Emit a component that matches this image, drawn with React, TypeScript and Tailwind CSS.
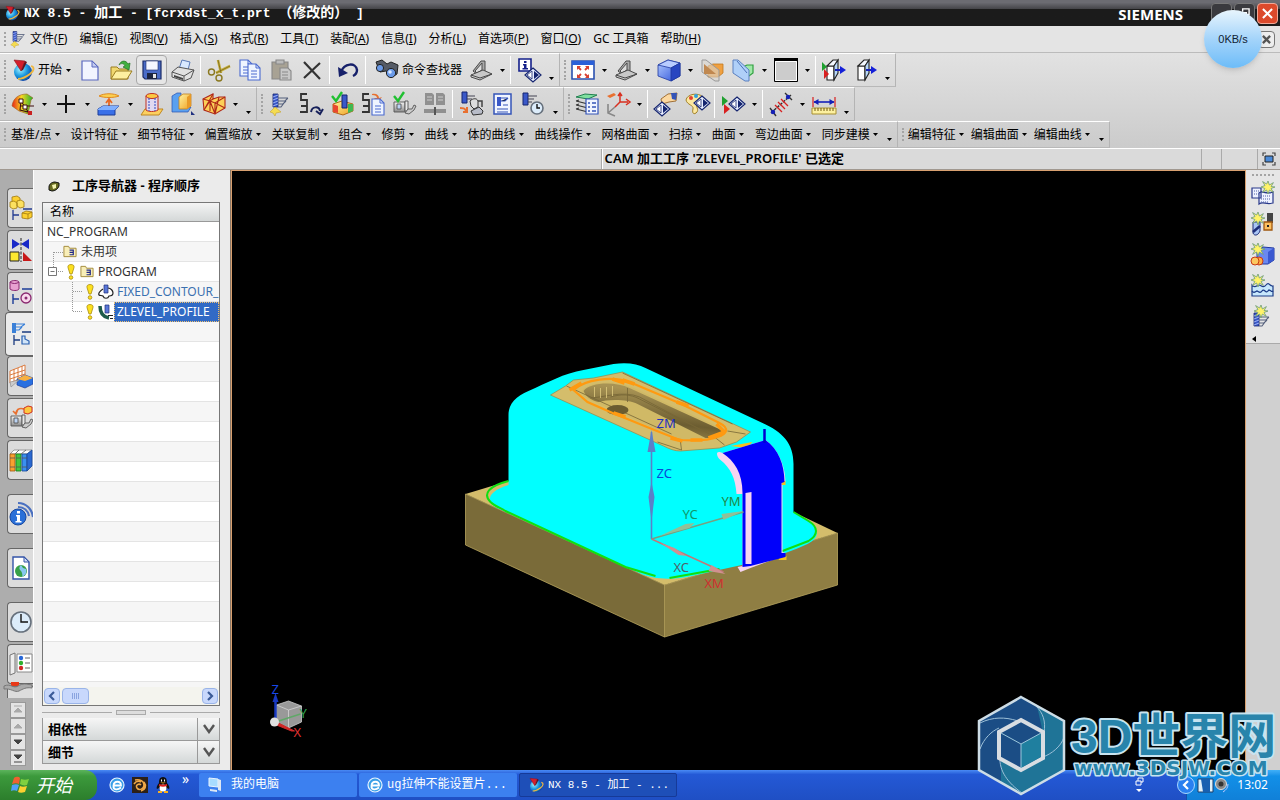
import React from 'react';

const UI_FONT = "font-['Noto_Sans','Noto_Sans_CJK_SC',sans-serif]";
const SONG_FONT = "font-['Liberation_Mono','Noto_Sans_CJK_SC',monospace]";

// ---------- shared drawing pieces ----------

const Defs = () => (
  <svg className="absolute size-0" aria-hidden="true">
    <defs>
      <linearGradient id="blueBox" x1="0" y1="0" x2="1" y2="1">
        <stop offset="0" stopColor="#b4ccff" />
        <stop offset="1" stopColor="#2a50d8" />
      </linearGradient>
      <linearGradient id="goldBox" x1="0" y1="0" x2="1" y2="1">
        <stop offset="0" stopColor="#fff3a0" />
        <stop offset="1" stopColor="#f0a020" />
      </linearGradient>
      <linearGradient id="rainbow" x1="0" y1="0" x2="1" y2="0">
        <stop offset="0" stopColor="#e8201a" />
        <stop offset="0.45" stopColor="#f8d820" />
        <stop offset="1" stopColor="#20b030" />
      </linearGradient>
      <linearGradient id="steel" x1="0" y1="0" x2="0" y2="1">
        <stop offset="0" stopColor="#f4f4f4" />
        <stop offset="1" stopColor="#8a8a8a" />
      </linearGradient>
      <radialGradient id="globe" cx="0.35" cy="0.35" r="0.75">
        <stop offset="0" stopColor="#a8f4ff" />
        <stop offset="0.5" stopColor="#1c9be0" />
        <stop offset="1" stopColor="#0a2f9a" />
      </radialGradient>
      <linearGradient id="pocketWall" x1="0" y1="0" x2="-0.3" y2="1">
        <stop offset="0" stopColor="#a89354" />
        <stop offset="0.5" stopColor="#6c5d31" />
        <stop offset="1" stopColor="#b8a25c" />
      </linearGradient>
    </defs>
  </svg>
);

const Tool = () => (
  <g>
    <path d="M8 2h5v13H8z" fill="#3a58c8" stroke="#14246e" strokeWidth="0.8" />
    <path d="M8 5l5-2M8 8l5-2M8 11l5-2M8 14l5-2" stroke="#a8bcf8" strokeWidth="0.9" />
    <path d="M13 6h10M13 9h7l3-3M13 12h5l3-3M13 15h3l3-4" fill="none" stroke="#55607c" strokeWidth="1.1" />
  </g>
);

const Diamond = ({ x = 12, y = 15 }: { x?: number; y?: number }) => (
  <g transform={`translate(${x} ${y})`}>
    <path d="M0-7L8 0 0 7-8 0z" fill="#e8eeff" stroke="#14246e" strokeWidth="1.2" />
    <path d="M-1-4v8l-5-4z" fill="#fff" stroke="#14246e" strokeWidth="0.8" />
    <path d="M1-4v8l5-4z" fill="#14246e" />
  </g>
);

const Spark = ({ x, y }: { x: number; y: number }) => (
  <path
    transform={`translate(${x} ${y})`}
    d="M0-6l1.4 4 4-2.4-2.3 3.9L7 0 3 1.5l2.4 3.9-4-2.3L0 7l-1.4-4-4 2.4 2.3-3.9L-7 0l4-1.5-2.4-3.9 4 2.4z"
    fill="#fff36a"
    stroke="#6a9a78"
    strokeWidth="0.8"
  />
);

const Logo = () => (
  <g>
    <circle cx="12" cy="14" r="9" fill="url(#globe)" />
    <path d="M5 17c4 5 10 6 14 1-3 4-10 4-14-1z" fill="#3ccf6a" />
    <path d="M20 8c4 1 3 5-1 8s-8 5-12 5" fill="none" stroke="#f0b840" strokeWidth="1.8" />
    <path d="M3 2l11 1-4 10z" fill="#d41f2c" stroke="#8a1018" strokeWidth="0.6" />
    <path d="M14 3l-4 10 2-1 4-8z" fill="#6a1018" />
  </g>
);

const Device = () => (
  <g stroke="#4a4a4a" strokeWidth="1">
    <path d="M4 13L12 3l4 0v10L9 17z" fill="#aaa" />
    <path d="M6 13l7-8v7L8 15z" fill="#ddd" />
    <path d="M2 17l12-5 9 4-12 6-9-3z" fill="#c8c8c8" />
    <path d="M2 17l9 3 12-4" fill="none" />
  </g>
);

const Door = ({ marks }: { marks?: boolean }) => (
  <g>
    <path d="M5 8h7v14H5z" fill="#fff" stroke="#222" strokeWidth="1.1" />
    <path d="M5 8l6-6h5l-4 6z" fill="#f4f8ff" stroke="#222" strokeWidth="1.1" />
    <path d="M12 8l4-6v13l-4 7z" fill="#b8d8f8" stroke="#222" strokeWidth="1.1" />
    <path d="M13 12h7" stroke="#1420b8" strokeWidth="2" />
    <path d="M18 8l6 4-6 4z" fill="#1420d8" />
    {marks && (
      <g>
        <path d="M0 4l5 5-5 4z" fill="#20a030" />
        <path d="M2 11l5 5-5 5z" fill="#d82020" />
      </g>
    )}
  </g>
);

const Check = () => <path d="M2 4l4 5L12 0" fill="none" stroke="#20c030" strokeWidth="2.4" />;

const Machine = () => (
  <g stroke="#555" strokeWidth="0.9">
    <path d="M2 10h11v10H2z" fill="url(#steel)" />
    <path d="M5 12h4v5H5z" fill="#bcd4f4" />
    <path d="M13 9h3v10h-3z" fill="#e8e8e8" />
    <path d="M16 17h4l2-4 2 1-2 4-5 4-4-1z" fill="#ccc" />
  </g>
);

const Doc = ({ x = 8, y = 6 }: { x?: number; y?: number }) => (
  <g transform={`translate(${x} ${y})`}>
    <path d="M0 0h8l4 4v12H0z" fill="#eef4ff" stroke="#4a6ad0" strokeWidth="1.1" />
    <path d="M8 0v4h4M3 7h6M3 10h6M3 13h6" fill="none" stroke="#4a6ad0" />
  </g>
);

const Clock = ({ x, y, r }: { x: number; y: number; r: number }) => (
  <g>
    <circle cx={x} cy={y} r={r} fill="#dcecfa" stroke="#66707c" strokeWidth="1.6" />
    <path d={`M${x} ${y - r + 2}V${y}H${x + r - 3}`} fill="none" stroke="#111" strokeWidth="1.4" />
  </g>
);

const Serpent = () => (
  <path d="M8 2H2v6h6v6H2M8 14v6H1" fill="none" stroke="#333" strokeWidth="1.8" />
);

const icons: Record<string, React.ReactNode> = {
  logo: <Logo />,
  tool: (
    <g>
      <Tool />
      <path d="M5 20l5-5 6 5-5 1-1 3-2-3z" fill="#f4dc50" stroke="#c09820" strokeWidth="0.5" />
    </g>
  ),
  new: (
    <g>
      <path d="M4 3h10l6 6v13H4z" fill="#f2f4ff" stroke="#5a68c0" strokeWidth="1.2" />
      <path d="M14 3v6h6z" fill="#c4ccf0" stroke="#5a68c0" />
    </g>
  ),
  open: (
    <g>
      <path d="M2 21V9h6l2 2h9v10z" fill="#f0d870" stroke="#9a7c20" />
      <path d="M2 21l5-8h16l-5 8z" fill="#fdf0a0" stroke="#9a7c20" />
      <path d="M10 7c2-5 7-5 9-1l2-1-1 7-6-3 2-1c-1-3-4-3-6-1z" fill="#40b040" stroke="#207020" strokeWidth="0.7" />
    </g>
  ),
  save: (
    <g>
      <path d="M3 3h18v18H5l-2-2z" fill="#4a6cc8" stroke="#1c2c68" strokeWidth="1.2" />
      <path d="M6 3h12v9H6z" fill="#f4f6ff" stroke="#1c2c68" strokeWidth="0.6" />
      <path d="M7 15h10v6H7z" fill="#1c2440" />
      <path d="M13 16h3v4h-3z" fill="#e8e8e8" />
    </g>
  ),
  print: (
    <g stroke="#555">
      <path d="M8 11l3-9 8 2-2 8z" fill="#d8e8ff" stroke="#5a7ab8" />
      <path d="M1 14l6-5 16 3-3 8-7 3-12-4z" fill="#e0e0e0" />
      <path d="M1 14l12 4 10-6M13 18v5" fill="none" />
      <path d="M3 17l9 3v2l-9-3z" fill="#444" stroke="none" />
    </g>
  ),
  cut: (
    <g fill="none" stroke="#8a7820" strokeWidth="1.4">
      <path d="M11 2l3 13M23 8L9 15" stroke="#c8b040" strokeWidth="2.6" />
      <path d="M11 2l3 13M23 8L9 15" stroke="#756418" strokeWidth="0.8" />
      <circle cx="4.5" cy="14" r="3" />
      <circle cx="12" cy="20" r="3" />
    </g>
  ),
  copy: (
    <g>
      <Doc x={2} y={2} />
      <Doc x={10} y={6} />
    </g>
  ),
  paste: (
    <g stroke="#888" strokeWidth="1.1">
      <path d="M3 4h16v17H3z" fill="#a8a294" />
      <path d="M7 2h8v4H7z" fill="#bbb" />
      <path d="M11 10h8l3 3v9H11z" fill="#c8c8c8" />
      <path d="M13 14h6M13 17h6M13 20h6" />
    </g>
  ),
  delete: <path d="M4 4l16 17M20 5L4 20" stroke="#333" strokeWidth="2.2" />,
  undo: (
    <g>
      <path d="M5 14C8 5 20 4 21 12c0 3-2 5-4 6" fill="none" stroke="#16206a" strokeWidth="2.4" />
      <path d="M2 9l1 10 9-4z" fill="#16206a" />
    </g>
  ),
  find: (
    <g>
      <path d="M1 4l6-2 5 4 4-2 7 3-1 9-5 3-6-6-6 1z" fill="#555b66" stroke="#222" />
      <circle cx="5" cy="10" r="3.6" fill="#6a9ae8" stroke="#222" />
      <circle cx="16" cy="15" r="4.6" fill="#6a9ae8" stroke="#222" />
      <circle cx="15" cy="14" r="1.8" fill="#d8e8ff" />
    </g>
  ),
  device: <Device />,
  info: (
    <g>
      <path d="M2 1h12v12H2z" fill="#fff" stroke="#14208a" strokeWidth="1.6" />
      <path d="M7 3h2.5v2H7zM6 6h3.5v4H11v1.5H5.500V10H7V7.500H6z" fill="#14208a" />
      <Diamond x={16} y={17} />
    </g>
  ),
  fit: (
    <g>
      <path d="M1 3h22v18H1z" fill="#fff" stroke="#2a50b0" strokeWidth="1.6" />
      <path d="M1 3h22v4H1z" fill="#2a60d8" />
      <path d="M7 9l3 3M17 9l-3 3M7 19l3-3M17 19l-3-3" stroke="#d84030" strokeWidth="1.8" />
      <path d="M6 8h4l-4 4zM18 8h-4l4 4zM6 20h4l-4-4zM18 20h-4l4-4z" fill="#d84030" />
    </g>
  ),
  cube: (
    <g stroke="#2038a0" strokeWidth="0.8">
      <path d="M1 7l10-5 12 3v13l-9 5L1 18z" fill="url(#blueBox)" />
      <path d="M1 7l10-5 12 3-9 5z" fill="#b8ccff" />
      <path d="M14 10l9-5v13l-9 5z" fill="#2846c0" />
    </g>
  ),
  clip: (
    <g>
      <path d="M8 8l5-2h10v9l-5 4H8z" fill="#f0a040" stroke="#c07820" strokeWidth="0.8" />
      <path d="M2 2l4 0 13 10v11l-4 0L2 14z" fill="#d8d4cc" fillOpacity="0.6" stroke="#999" />
      <path d="M4 6l12 10H4z" fill="#c08850" />
    </g>
  ),
  clipEdit: (
    <g>
      <path d="M12 9l4-2h6v8l-4 3h-6z" fill="#a0e8a8" stroke="#30a040" strokeWidth="1.2" />
      <path d="M2 2h5l11 10v11h-4L2 15z" fill="#b0d0f8" stroke="#5a80c0" />
      <path d="M6 3l10 12" stroke="#4a70b8" />
    </g>
  ),
  swatch: (
    <g>
      <path d="M.5.5h23v23H.5z" fill="#ccc" stroke="#000" />
      <path d="M0 0h24v3H0z" fill="#000" />
      <path d="M1.500 3.500h21v19h-21z" fill="none" stroke="#fff" />
    </g>
  ),
  doorMarks: <Door marks />,
  door: <Door />,
  curveAnalysis: (
    <g>
      <path d="M1 14C2 6 8 2 16 2l6 4-2 2-3 14-9-3z" fill="url(#rainbow)" stroke="#a06020" strokeWidth="0.6" />
      <path d="M10 9l8 12M10 9l-1 9 12 3M9 14h14" fill="none" stroke="#401010" strokeWidth="1.1" />
      <path d="M8 7h4v4H8zM12 13h4v4h-4z" fill="#fff" stroke="#401010" />
      <path d="M17 19h4v4h-4z" fill="#c82020" />
    </g>
  ),
  plus: <path d="M12 3v18M3 12h18" stroke="#111" strokeWidth="2" />,
  extrude: (
    <g>
      <path d="M2 4c5-3 15-3 20 0-5 2-15 2-20 0z" fill="#fcd050" stroke="#e08a20" />
      <path d="M12 17V8M9 11l3-4 3 4" fill="none" stroke="#e86820" strokeWidth="1.8" />
      <path d="M1 17l5-3h16l-4 4v5H1z" fill="#3a70e8" stroke="#1c3c98" />
      <path d="M1 17l5-3h16l-4 4H1z" fill="#80b0ff" />
    </g>
  ),
  cylinder: (
    <g>
      <path d="M5 17h18l-4 6H1z" fill="#fcd060" stroke="#c08820" />
      <path d="M6 4v14c2 2 9 2 12 0V4z" fill="#e0d8f0" stroke="#c03020" />
      <ellipse cx="12" cy="4" rx="6" ry="2.5" fill="#fcc840" stroke="#c03020" />
      <path d="M9 6v13M15 6v13" stroke="#3048c0" strokeDasharray="2 1" />
    </g>
  ),
  offset: (
    <g>
      <path d="M1 4l5-3h4v14h10l-3 5H1z" fill="#5aa0f0" stroke="#2850b0" strokeWidth="0.7" />
      <path d="M8 5l4-3h8v12l-4 3H8z" fill="url(#goldBox)" stroke="#c08020" strokeWidth="0.8" />
      <path d="M16 5l4-3v12l-4 3z" fill="#e89a28" />
      <path d="M20 19v4h4z" fill="#203080" />
    </g>
  ),
  wireBox: (
    <g stroke="#b02818" strokeWidth="1.1" fill="#fcd058">
      <path d="M1 7l10-5v5l6-2 6 0v11l-10 6L2 18z" />
      <path d="M1 7l7 2 3-2M8 9l5 2 10-6M13 11v11M8 9v10M2 18L11 2M8 9l5 13M13 11l10 5M2 18l6-9M17 5l-4 17" fill="none" />
    </g>
  ),
  createTool: (
    <g transform="translate(-3 0)">
      <Tool />
      <path d="M5 20l5-5 6 5-5 1-1 3-2-3z" fill="#f4dc50" stroke="#c09820" strokeWidth="0.5" />
    </g>
  ),
  path: (
    <g>
      <Serpent />
      <path d="M12 20c1-6 8-6 9-1M24 17l-3 5-4-3" fill="none" stroke="#16205a" strokeWidth="2" />
    </g>
  ),
  verify: (
    <g>
      <path d="M3 12l9-3 11 3v7l-10 4L3 20z" fill="url(#goldBox)" stroke="#b06818" />
      <path d="M3 12l5 2v7l-5-1z" fill="#e84830" />
      <path d="M18 12l5 0v7l-5 2z" fill="#40b850" />
      <path d="M12 3h5v13h-5z" fill="#3a58c8" stroke="#14246e" />
      <Check />
    </g>
  ),
  output: (
    <g>
      <Serpent />
      <path d="M11 2c4-1 7 1 7 4l3-1-4 5-4-4h3c0-2-2-3-5-3z" fill="#e87030" />
      <Doc x={11} y={7} />
    </g>
  ),
  verifyMachine: (
    <g>
      <Machine />
      <Check />
    </g>
  ),
  compare: (
    <g fill="#909090">
      <path d="M2 1h7l2 2v10H2zM13 1h7l2 2v10h-9z" />
      <path d="M1 17h22v4H1z" />
      <path d="M11 15h2v8h-2z" fill="#555" />
      <path d="M4 5h5M4 8h5M15 5h5M15 8h5" stroke="#ccc" />
    </g>
  ),
  toolMachine: (
    <g>
      <path d="M3 0h5v11H3z" fill="#3a58c8" stroke="#14246e" />
      <path d="M8 4h8M8 7h5" stroke="#445" strokeWidth="1.2" />
      <path d="M11 9c3-3 7-3 8 0v6l-4 2-3-3z" fill="#ddd" stroke="#333" />
      <path d="M12 19l8-4 4 4-1 3-9 1z" fill="#b8bcc8" stroke="#333" />
      <path d="M19 9h4v6" fill="none" stroke="#444" strokeWidth="1.5" />
      <path d="M1 16c3 0 5 0 6 3M8 15v5H4" fill="none" stroke="#e87030" strokeWidth="2" />
    </g>
  ),
  shopDoc: (
    <g>
      <path d="M4 2h17v20H4z" fill="#f2f6ff" stroke="#3454b8" strokeWidth="1.5" />
      <path d="M7 5h4v9H7z" fill="#3a58c8" />
      <path d="M11 6h7M11 9h4l3-3M7 17h11M7 20h11M13 13h5" stroke="#3454b8" strokeWidth="1.2" />
    </g>
  ),
  toolClock: (
    <g>
      <path d="M2 1h5v12H2z" fill="#3a58c8" stroke="#14246e" />
      <path d="M7 4h9M7 7h6M7 10h4" stroke="#445" strokeWidth="1.2" />
      <Clock x={16} y={16} r={6} />
    </g>
  ),
  layers: (
    <g>
      <path d="M1 5l9-3 12 1-9 4z" fill="#80e0a0" stroke="#208050" />
      <path d="M1 9l12 3M1 13l12 3M1 17l12 3M1 9l3-1M1 13l3-1M1 17l3-1" stroke="#333" strokeWidth="1.2" />
      <path d="M11 7h12v15H11z" fill="#f0f4ff" stroke="#3454b8" strokeWidth="1.2" />
      <path d="M13 11h2M17 11h4M13 15h2M17 15h4M13 19h2M17 19h4" stroke="#3454b8" strokeWidth="1.4" />
    </g>
  ),
  wcs: (
    <g fill="none">
      <path d="M2 12v9l7 3M2 21l7-6" stroke="#888" strokeWidth="1.6" />
      <path d="M14 1v9l8 0M14 10l-5 5M20 7l4 3-4 3M12 4l2-3 2 3" stroke="#d83020" strokeWidth="1.5" />
      <path d="M1 4l7-3 2 2-6 3z" fill="#e87030" />
    </g>
  ),
  handInfo: (
    <g>
      <path d="M7 7l7-5 9-1-1 8-7 1-7 2z" fill="#fcd8a0" stroke="#a07038" />
      <path d="M17 1l6 0-1 7-4-1z" fill="#3454b8" />
      <Diamond x={8} y={17} />
    </g>
  ),
  palette: (
    <g>
      <path d="M1 8c1-6 12-8 17-3 4 5-2 7-6 7-2 2 3 6-1 9-3 2-4-1-3-4 1-4-6-4-7-9z" fill="#fce8a0" stroke="#a08028" />
      <circle cx="6" cy="6" r="2" fill="#e04030" />
      <circle cx="11" cy="4" r="2" fill="#30a0e0" />
      <g transform="translate(7 -3)">
        <Diamond x={10} y={14} />
      </g>
    </g>
  ),
  runInfo: (
    <g>
      <path d="M1 4l6 5-6 5z" fill="#20a030" />
      <path d="M3 12l6 5-6 5z" fill="#d82020" />
      <Diamond x={16} y={12} />
    </g>
  ),
  measure: (
    <g>
      <path d="M2 21L22 3" stroke="#333" strokeWidth="1.4" strokeDasharray="3 1" />
      <path d="M1 16l6 8M16 1l7 7" stroke="#333" strokeWidth="1.4" />
      <path d="M6 13l7 7M9 10l7 7M12 7l7 7" stroke="#d82020" strokeWidth="1.3" />
      <circle cx="4" cy="20" r="2.2" fill="#1420b8" />
      <circle cx="19" cy="5" r="2.2" fill="#1420b8" />
    </g>
  ),
  ruler: (
    <g>
      <path d="M1 5v10M23 5v10" stroke="#d82020" strokeWidth="1.2" />
      <path d="M2 10h20" stroke="#1420b8" strokeWidth="1.6" />
      <path d="M1.500 10l5-3v6zM22.500 10l-5-3v6z" fill="#1420b8" />
      <path d="M0 16h24v6H0z" fill="#fcf0a0" stroke="#a89030" />
      <path d="M3 16v3M6 16v3M9 16v3M12 16v3M15 16v3M18 16v3M21 16v3" stroke="#705810" />
    </g>
  ),
  // resource bar
  assembly: (
    <g>
      <path d="M3 1l5-1 3 2v6l-5 2-3-2z" fill="#fcd030" stroke="#a07810" strokeWidth="0.8" />
      <path d="M1 6l4-1 3 2v5l-4 1-3-2zM8 5l4-1 3 2v5l-4 1-3-2z" fill="#fce060" stroke="#a07810" strokeWidth="0.8" />
      <path d="M14 13h9M4 14v10M4 19h6" stroke="#223a90" strokeWidth="1.3" />
      <path d="M13 17l4-2 6 1v5l-4 2-6-1z" fill="#fcd030" stroke="#a07810" strokeWidth="0.8" />
      <path d="M13 17l6 1 4-2M19 18v5" fill="none" stroke="#a07810" strokeWidth="0.8" />
    </g>
  ),
  constraint: (
    <g>
      <path d="M3 1l8 5-8 5zM20 1l-8 5 8 5z" fill="#1828c8" />
      <path d="M12 0v24" stroke="#222" strokeDasharray="3 1.5" />
      <path d="M1 14h9v9H1z" fill="#fce830" stroke="#222" />
      <path d="M14 14l9 9h-9z" fill="#c81818" />
    </g>
  ),
  part: (
    <g>
      <path d="M1 2c2-2 8-2 9 0v7c-1 2-7 2-9 0z" fill="#e8a0d0" stroke="#8a2870" />
      <path d="M1 2c2 2 7 2 9 0" fill="none" stroke="#8a2870" />
      <path d="M13 9h10M4 14v10M4 19h6" stroke="#1c3c98" strokeWidth="1.4" />
      <circle cx="17" cy="18" r="5" fill="#f8d8ec" stroke="#8a2870" strokeWidth="1.3" />
      <circle cx="17" cy="18" r="1.5" fill="#8a2870" />
    </g>
  ),
  operations: (
    <g>
      <path d="M3 1h4v10H3z" fill="#3a80d8" />
      <path d="M7 2h9M7 5h5l4-3M7 8h3l3-3" fill="none" stroke="#3a80d8" strokeWidth="1.2" />
      <path d="M13 10h9M5 13v10M5 18h6" stroke="#1c3c80" strokeWidth="1.3" />
      <path d="M13 14h3v3l4 2v3h-7z" fill="#d0e4f8" stroke="#2a60b0" strokeWidth="1.2" />
    </g>
  ),
  machineTool: (
    <g>
      <path d="M1 7l15-6v12L1 19zM1 11l15-5M1 15l15-5M5 5v12M9 4v12M13 2v12" fill="#fff" stroke="#d87030" strokeWidth="0.9" />
      <path d="M8 15l8-4 8 3v6l-8 4-8-3z" fill="#2a70e0" stroke="#1c3c98" strokeWidth="0.7" />
      <path d="M8 15l8-4 8 3-8 3z" fill="#f8b040" />
      <path d="M1 18l9-2-8 7z" fill="#ccc" stroke="#888" strokeWidth="0.6" />
    </g>
  ),
  machineNav: (
    <g>
      <Machine />
      <path d="M7 7c1-5 5-5 8-4M9 3L7 8 4 5" fill="none" stroke="#e87030" strokeWidth="1.6" />
      <path d="M15 2l4-2 4 1v5l-4 2-4-1z" fill="#fcc840" stroke="#d03020" />
    </g>
  ),
  books: (
    <g strokeWidth="0.8">
      <path d="M1 6l4-4h18l-5 4z" fill="#fff" stroke="#888" />
      <path d="M1 6h5v17H1z" fill="#f8a030" stroke="#a05810" />
      <path d="M7 6h5v17H7z" fill="#40c840" stroke="#187818" />
      <path d="M13 6h5v17h-5z" fill="#3a90f0" stroke="#184898" />
      <path d="M18 6l5-4v16l-5 5z" fill="#2a68d0" stroke="#184898" />
      <path d="M6 6l4-4M12 6l5-4M1 10h5M7 10h5M13 10h5M1 19h5M7 19h5M13 19h5" stroke="#555" />
    </g>
  ),
  infoFeed: (
    <g>
      <circle cx="9" cy="15" r="8" fill="#2a70d8" stroke="#1848a0" />
      <path d="M8 9h3v2.500H8zM7 13h4v6h1.500v1.500h-6V19H8v-4.500H7z" fill="#fff" />
      <path d="M9 1c8 0 14 6 15 14M9 5c6 0 10 4 11 9" fill="none" stroke="#4a70c0" strokeWidth="2.2" />
    </g>
  ),
  web: (
    <g>
      <path d="M4 1h11l5 5v17H4z" fill="#fff" stroke="#3454a8" strokeWidth="1.4" />
      <path d="M15 1v5h5z" fill="#d0dcf4" stroke="#3454a8" />
      <circle cx="12" cy="15" r="6" fill="#38a048" />
      <path d="M12 9c-3 3-1 5 0 6s2 5 1 6c4-2 5-5 4-8l-3-1z" fill="#88c8f0" />
    </g>
  ),
  history: <Clock x={12} y={12} r={10} />,
  roles: (
    <g>
      <path d="M1 3l5-2v20l-5 2z" fill="#eee" stroke="#777" />
      <path d="M8 2h15v18H8z" fill="#fff" stroke="#888" />
      <circle cx="12" cy="6" r="2.2" fill="#2868d8" />
      <circle cx="12" cy="11" r="2.2" fill="#30b030" />
      <circle cx="12" cy="16" r="2.2" fill="#d02828" />
      <path d="M16 6h5M16 11h5M16 16h5" stroke="#666" strokeWidth="1.2" />
    </g>
  ),
  partial: (
    <g>
      <path d="M3 8h8v4H3z" fill="#e83818" />
      <path d="M-4 12c7-3 9 3 14 0s8-2 14-1v3c-6-1-9 1-13 3s-8-3-15-2z" fill="#aaa" stroke="#777" />
    </g>
  ),
  // right hand toolbar
  createProgram: (
    <g>
      <path d="M1 7h9v10H1zM8 12c3-3 7 2 14-1v11c-7 2-10-2-14 1z" fill="#eef2ff" stroke="#28388a" strokeWidth="1.2" />
      <path d="M3 10h6M3 13h5M10 15h10M10 18h10M10 21h8" stroke="#5060a8" strokeDasharray="1 1" />
      <Spark x={17} y={6} />
    </g>
  ),
  createCutter: (
    <g>
      <path d="M16 1h6v10h-6z" fill="#444" />
      <path d="M13 10h8v8h-8z" fill="#fcc060" stroke="#a05810" strokeWidth="1.3" />
      <path d="M16 13h2v2h-2z" fill="#222" />
      <path d="M2 10h7v9c-2 5-6 5-7 2z" fill="#a8c4f4" stroke="#1c2c78" />
      <path d="M2 20l7-6" stroke="#1c2c78" strokeWidth="2.5" />
      <Spark x={7} y={6} />
    </g>
  ),
  createGeometry: (
    <g>
      <path d="M6 8l6-4 11 1v12l-6 4H6z" fill="#6a88f0" stroke="#2038a0" />
      <path d="M17 9l6-4v12l-6 4z" fill="#3a58d0" />
      <circle cx="8" cy="18" r="4" fill="#fcb040" stroke="#c83818" />
      <circle cx="4" cy="18" r="4" fill="#fcc860" stroke="#c83818" />
      <Spark x={7} y={6} />
    </g>
  ),
  createMethod: (
    <g>
      <path d="M1 11c3 4 5 0 7 0s4 4 7 0 4 2 7 1v10H1z" fill="#c8e8fc" stroke="#1c3c88" strokeWidth="1.2" />
      <path d="M1 17c2 3 4 0 5 0s3 3 5 0 4 3 6 0 3 2 5 0" fill="none" stroke="#1c3c88" strokeWidth="1.3" />
      <Spark x={7} y={6} />
    </g>
  ),
  createOperation: (
    <g>
      <g transform="translate(-5 6)">
        <Tool />
      </g>
      <Spark x={10} y={6} />
    </g>
  ),
};

const Icon = ({ name, className = 'size-6' }: { name: string; className?: string }) => (
  <svg viewBox="0 0 24 24" className={`${className} shrink-0 overflow-visible`} aria-hidden="true">
    {icons[name]}
  </svg>
);

const Arrow = () => (
  <svg viewBox="0 0 5 3" className="h-[3px] w-[5px]" aria-hidden="true">
    <path d="M0 0h5L2.500 3z" fill="#000" />
  </svg>
);

// ---------- toolbars ----------

type Item = string | { text: string; pad?: boolean };

// ',' is a drop-down arrow, '|' a divider, '.' the toolbar overflow arrow
const rowOne: Item[][] = [
  ['logo', { text: '开始' }, ',', 'new', 'open', 'save', 'print', '|', 'cut', 'copy', 'paste', 'delete', '|', 'undo', '|', 'find', { text: '命令查找器', pad: true }, 'device', ',', '|', 'info', '.'],
  ['fit', ',', 'device', ',', 'cube', ',', 'clip', 'clipEdit', ',', 'swatch', ',', '|', 'doorMarks', 'door', '.'],
];

const rowTwo: Item[][] = [
  ['curveAnalysis', ',', 'plus', ',', 'extrude', ',', 'cylinder', 'offset', 'wireBox', ',', '.'],
  ['createTool', 'path', 'verify', 'output', 'verifyMachine', 'compare', '|', 'toolMachine', 'shopDoc', 'toolClock', '.'],
  ['layers', 'wcs', ',', '|', 'handInfo', 'palette', '|', 'runInfo', ',', '|', 'measure', ',', 'ruler', '.'],
];

const rowThree = [
  ['基准/点', '设计特征', '细节特征', '偏置缩放', '关联复制', '组合', '修剪', '曲线', '体的曲线', '曲线操作', '网格曲面', '扫掠', '曲面', '弯边曲面', '同步建模'],
  ['编辑特征', '编辑曲面', '编辑曲线'],
];

const Grip = () => <span className="my-1.5 ml-1 w-[3px] shrink-0 border-l-2 border-dotted border-[#a4a4a4]" />;

const Group = ({ children }: { children: React.ReactNode }) => (
  <div className="flex border-t border-r border-b border-t-white border-r-[#b4b4b4] border-b-[#b8b8b8]">
    <Grip />
    {children}
  </div>
);

const ToolItem = ({ item }: { item: Item }) => {
  if (typeof item !== 'string') {
    return <button className={`whitespace-nowrap ${item.pad ? 'mr-[3px]' : ''}`}>{item.text}</button>;
  }
  if (item === '|') return <span className="mx-[2px] my-0.5 w-px shrink-0 bg-white" />;
  if (item === ',') {
    return (
      <button aria-label="more" className="flex w-3 shrink-0 items-center justify-center">
        <Arrow />
      </button>
    );
  }
  if (item === '.') {
    return (
      <button aria-label="toolbar options" className="flex w-[15px] shrink-0 items-end justify-center pb-1.5">
        <Arrow />
      </button>
    );
  }
  return (
    <button
      aria-label={item}
      className={`flex w-[31px] shrink-0 items-center justify-center rounded-sm ${
        item === 'save' ? 'my-px border border-[#a8a8a8] bg-[#e6e6e6]' : ''
      } ${item === 'find' ? 'ml-[3px]' : ''}`}
    >
      <Icon name={item} />
    </button>
  );
};

const ToolRow = ({ groups }: { groups: Item[][] }) => (
  <div className="flex h-[34px] text-xs">
    {groups.map((group, g) => (
      <Group key={g}>
        {group.map((item, i) => (
          <ToolItem key={i} item={item} />
        ))}
      </Group>
    ))}
  </div>
);

const TextRow = () => (
  <div className="flex h-[27px] text-xs">
    {rowThree.map((group, g) => (
      <Group key={g}>
        <div className={`flex ${g === 0 ? 'gap-[7px] pl-1' : 'gap-[3px] pl-[3px]'}`}>
          {group.map((label) => (
            <button key={label} className="flex items-center whitespace-nowrap">
              {label}
              <span className="flex w-3 justify-center">
                <Arrow />
              </span>
            </button>
          ))}
        </div>
        <ToolItem item="." />
      </Group>
    ))}
  </div>
);

const TitleBar = () => (
  <header className="flex h-[26px] shrink-0 items-center bg-linear-to-b from-[#6c6c72] from-10% via-[#444448] via-35% to-[#1b1b1b] to-36% pr-0.5 pl-1 text-white">
    <Icon name="logo" className="size-4" />
    <h1 className={`ml-1 text-[13px] font-bold whitespace-pre ${SONG_FONT}`}>
      {'NX 8.5 - '}
      <span className="text-sm">加工</span>
      {' - [fcrxdst_x_t.prt '}
      <span className="text-sm">（修改的）</span>
      {' ]'}
    </h1>
    <span className="mt-0.5 mr-7 ml-auto text-[15px] font-bold font-['Open_Sans',sans-serif]">SIEMENS</span>
    <div className="flex gap-0.5">
      <button aria-label="Minimize" className="flex size-[21px] items-end rounded-sm border border-[#777] bg-[#3a3a3e] p-1">
        <span className="h-0.5 w-2 bg-white" />
      </button>
      <button aria-label="Restore" className="size-[21px] rounded-sm border border-[#777] bg-[#3a3a3e] p-1">
        <svg viewBox="0 0 12 12" fill="none" stroke="#fff" strokeWidth="1.5">
          <path d="M4 4V1h7v6H8M1 5h7v6H1z" />
        </svg>
      </button>
      <button aria-label="Close" className="size-[21px] rounded-sm border border-[#f0a898] bg-[#dc4a2c] p-1">
        <svg viewBox="0 0 12 12" stroke="#fff" strokeWidth="2.2">
          <path d="M1 1l10 10M11 1L1 11" />
        </svg>
      </button>
    </div>
  </header>
);

const menus = [
  ['文件', 'F'],
  ['编辑', 'E'],
  ['视图', 'V'],
  ['插入', 'S'],
  ['格式', 'R'],
  ['工具', 'T'],
  ['装配', 'A'],
  ['信息', 'I'],
  ['分析', 'L'],
  ['首选项', 'P'],
  ['窗口', 'O'],
  ['GC 工具箱', ''],
  ['帮助', 'H'],
];

const MenuBar = () => (
  <nav className="flex h-[27px] shrink-0 items-stretch border-b border-[#bbb] bg-[#e4e4e4] text-xs">
    <Grip />
    <span className="flex w-[23px] items-center">
      <Icon name="tool" className="size-[18px]" />
    </span>
    <div className="flex gap-3">
      {menus.map(([label, key]) => (
        <button key={label} className="whitespace-nowrap">
          {label}
          {key && (
            <>
              (<u>{key}</u>)
            </>
          )}
        </button>
      ))}
    </div>
    <button aria-label="Close part" className="my-auto mr-[5px] ml-auto size-[17px] rounded-sm border border-[#777] bg-[#eee] p-[3px]">
      <svg viewBox="0 0 10 10" stroke="#555" strokeWidth="2.5">
        <path d="M1 1l8 8M9 1L1 9" />
      </svg>
    </button>
  </nav>
);

const StatusBar = () => (
  <div className="flex h-[22px] shrink-0 border-t border-b border-t-white border-b-[#a09890] bg-[#dadada] text-[13px] font-semibold">
    <div className="w-[47%] shrink-0 border-r border-[#aaa]" />
    <p className="flex-1 border-l border-white pl-0.5 leading-[18px]">CAM 加工工序 'ZLEVEL_PROFILE' 已选定</p>
    <span className="w-5 border-l border-[#aaa]" />
    <span className="w-9 border-l border-[#aaa]" />
    <button aria-label="Full screen" className="flex w-[23px] items-center justify-center border-l border-[#aaa]">
      <svg viewBox="0 0 14 14" className="size-[14px]">
        <path d="M1 4V1h3M10 1h3v3M13 10v3h-3M4 13H1v-3" fill="none" stroke="#444" strokeWidth="1.2" />
        <path d="M3 4h8v6H3z" fill="#4a8ad8" stroke="#222" />
      </svg>
    </button>
  </div>
);

// ---------- resource bar and navigator ----------

const tabGroups = [
  ['assembly', 'constraint', 'part', 'operations', 'machineTool', 'machineNav', 'books'],
  ['infoFeed'],
  ['web'],
  ['history', 'roles'],
];

const scrollPaths = ['M3 3h8M7 5l4 4H3z', 'M7 5l4 4H3z', 'M3 5h8L7 9z', 'M3 4h8L7 8zM3 11h8'];

const ResourceBar = () => (
  <aside className="flex w-[33px] shrink-0 flex-col overflow-hidden bg-[#adadad] pt-[18px]">
    <div className="flex min-h-0 flex-1 flex-col gap-3.5 overflow-hidden">
      {tabGroups.map((group, g) => (
        <div key={g} className="flex flex-col gap-0.5">
          {group.map((name) => (
            <button
              key={name}
              aria-label={name}
              className={`flex shrink-0 items-center rounded-l-sm border border-r-0 border-[#666] ${
                name === 'operations' ? '-my-0.5 ml-[5px] h-11 bg-[#ebebeb] pl-[3px]' : 'ml-[7px] h-10 bg-[#dcdcdc] pl-px'
              }`}
            >
              <Icon name={name} />
            </button>
          ))}
          {g === 3 && (
            <button aria-label="more tabs" className="ml-[7px] flex h-3 items-end border border-r-0 border-b-0 border-[#666] bg-[#dcdcdc]">
              <Icon name="partial" />
            </button>
          )}
        </div>
      ))}
    </div>
    <div className="flex flex-col pt-1 pb-1 pl-2.5">
      {scrollPaths.map((d, i) => (
        <button key={d} aria-label="scroll tabs" className="size-4 border border-[#999] bg-[#e4e4e4]">
          <svg viewBox="0 0 14 14" fill={i < 2 ? '#aaa' : '#444'} stroke={i < 2 ? '#aaa' : '#444'}>
            <path d={d} />
          </svg>
        </button>
      ))}
    </div>
  </aside>
);

const Folder = () => (
  <svg viewBox="0 0 15 13" className="mr-1 h-[13px] w-[14px] shrink-0">
    <path d="M1 12V1h5l1 2h7v9z" fill="#f8eeb8" stroke="#a08838" />
    <path d="M7 5h4v5H7M7 7.500h4" fill="none" stroke="#202888" strokeWidth="1.3" />
  </svg>
);

const Bang = () => (
  <svg viewBox="0 0 8 16" className="h-4 w-2 shrink-0">
    <path d="M4 .5c2 0 3.500 1 3 3L5 10H3L1 3.500C.5 1.500 2 .5 4 .5z" fill="#fce020" stroke="#a88c10" strokeWidth="0.8" />
    <circle cx="4" cy="13.5" r="1.8" fill="#fce020" stroke="#a88c10" strokeWidth="0.8" />
  </svg>
);

const Guide = ({ d, wide, box }: { d: string; wide?: boolean; box?: boolean }) => (
  <svg viewBox={wide ? '0 0 40 20' : '0 0 20 20'} className={`h-5 shrink-0 ${wide ? 'w-10' : 'w-5'}`}>
    <path d={d} fill="none" stroke="#999" strokeDasharray="1 1" />
    {box && <path d="M5.500 5.500h8v8h-8zM7.500 9.500h4" fill="#fff" stroke="#777" />}
  </svg>
);

const rowClass = 'flex h-5 shrink-0 items-center border-b border-[#e4e4e4] whitespace-nowrap';

const Tree = () => (
  <div className="flex min-h-0 flex-1 flex-col border border-[#777] bg-white">
    <div className="h-[19px] shrink-0 border-b border-[#999] bg-linear-to-b from-[#f4f4f4] to-[#d4d8d8] pl-[7px] leading-[18px]">
      名称
    </div>
    <ul className="flex min-h-0 flex-1 flex-col overflow-hidden text-[#333]" aria-label="程序顺序">
      <li className={`${rowClass} bg-white pl-1`}>NC_PROGRAM</li>
      <li className={`${rowClass} bg-[#f6f6f6]`}>
        <Guide d="M10.500 10v10M11 10.500h9" />
        <Folder />
        未用项
      </li>
      <li className={`${rowClass} bg-white`}>
        <Guide d="M10.500 0v6M13 9.500h7" box />
        <span className="flex w-[17px] pl-1">
          <Bang />
        </span>
        <Folder />
        PROGRAM
      </li>
      <li className={`${rowClass} bg-[#f6f6f6]`}>
        <Guide d="M29.500 0v20M30 9.500h9" wide />
        <span className="flex w-[15px] pl-[3px]">
          <Bang />
        </span>
        <svg viewBox="0 0 16 16" className="size-4 shrink-0">
          <path d="M5 5c-3 2-5 4-4 6 1 1 3 0 4 1 1 3 5 3 6 0 2 0 4-1 4-3s-2-5-5-5" fill="#fff" stroke="#222" strokeWidth="1.2" />
          <path d="M6 1h4v8H6z" fill="#5a78d8" stroke="#1c2c78" strokeWidth="0.7" />
        </svg>
        <span className="pl-[3px] text-[#3a70b0]">FIXED_CONTOUR_</span>
      </li>
      <li className={`${rowClass} bg-white`}>
        <Guide d="M29.500 0v9M30 9.500h9" wide />
        <span className="flex w-[15px] pl-[3px]">
          <Bang />
        </span>
        <svg viewBox="0 0 16 16" className="size-4 shrink-0">
          <path d="M2 2c0 7 3 11 9 12" fill="none" stroke="#1c5a4a" strokeWidth="3.5" />
          <path d="M7 1h4v8H7z" fill="#5a78d8" stroke="#1c2c78" strokeWidth="0.7" />
          <path d="M10 11.500h5M12 14.500h3" stroke="#222" />
        </svg>
        <span className="flex-1 border border-dotted border-[#f0c070] bg-[#316ac5] pl-0.5 leading-[18px] text-white">ZLEVEL_PROFILE</span>
      </li>
      {Array.from({ length: 40 }, (_, i) => (
        <li key={i} aria-hidden="true" className={`${rowClass} ${i % 2 ? 'bg-white' : 'bg-[#f6f6f6]'}`} />
      ))}
    </ul>
    <div className="flex h-[18px] shrink-0 items-center bg-[#f4f4ee] px-px">
      <button aria-label="scroll left" className="size-4 rounded-sm border border-[#9ab4e8] bg-[#c8d8fc]">
        <svg viewBox="0 0 14 14" fill="none" stroke="#3a5a98" strokeWidth="2.2">
          <path d="M9 3L5 7l4 4" />
        </svg>
      </button>
      <span className="ml-0.5 flex h-4 w-[27px] items-center justify-center gap-px rounded-sm border border-[#9ab4e8] bg-[#c8d8fc]">
        {[0, 1, 2, 3].map((n) => (
          <i key={n} className="h-1.5 w-px bg-[#8aa4e0]" />
        ))}
      </span>
      <button aria-label="scroll right" className="ml-auto size-4 rounded-sm border border-[#9ab4e8] bg-[#c8d8fc]">
        <svg viewBox="0 0 14 14" fill="none" stroke="#3a5a98" strokeWidth="2.2">
          <path d="M5 3l4 4-4 4" />
        </svg>
      </button>
    </div>
  </div>
);

const Section = ({ label }: { label: string }) => (
  <button className="flex h-[23px] items-stretch border-r border-b border-l border-[#999] bg-linear-to-b from-[#f6f6f6] to-[#d4d8d8] text-left text-[13px] font-bold">
    <span className="flex-1 pl-[5px] leading-[23px]">{label}</span>
    <span className="flex w-[22px] items-center justify-center border-l border-[#999]">
      <svg viewBox="0 0 12 10" className="h-2.5 w-3">
        <path d="M1 1l5 7 5-7" fill="none" stroke="#555" strokeWidth="2.4" />
      </svg>
    </span>
  </button>
);

const Navigator = () => (
  <section className="flex w-[198px] shrink-0 flex-col border-r border-l border-r-[#8a7868] border-l-white bg-[#ebebeb] pr-[10px] pl-2 text-xs">
    <div className="flex h-8 shrink-0 items-center text-[13px] font-bold">
      <svg viewBox="0 0 12 12" className="mr-3 ml-1.5 size-3">
        <path d="M1 7c0-3 3-5 6-5l4 1v3c-1 3-4 5-7 5L1 10z" fill="#666a20" stroke="#111" />
        <path d="M4 5l4-1v4L5 9z" fill="#f4f4b0" />
      </svg>
      <h2>工序导航器 - 程序顺序</h2>
    </div>
    <Tree />
    <div className="flex h-3 shrink-0 items-center gap-1">
      <span className="h-px flex-1 bg-[#aaa]" />
      <span className="h-[5px] w-[30px] border border-[#aaa] bg-[#ddd]" />
      <span className="h-px flex-1 bg-[#aaa]" />
    </div>
    <Section label="相依性" />
    <Section label="细节" />
    <div className="h-1.5 shrink-0" />
  </section>
);

// ---------- graphics window ----------

const Viewport = () => (
  <main className="min-w-0 flex-1 border-t border-r border-l border-[#d8a070] bg-black">
    <svg viewBox="232 171 1012 599" className={`size-full text-[13px] ${UI_FONT}`} role="img" aria-label="model">
      {/* base plate */}
      <path d="M465 494L508 481 793 512 837 533 664 585z" fill="#d4bd6b" />
      <path d="M465 494l199 91v52l-199-92z" fill="#7a6b39" />
      <path d="M664 585l173-52v52l-173 52z" fill="#8f7e43" />
      <path d="M465 494l199 91v52l-199-92zM664 585l173-52v52l-173 52" fill="none" stroke="#b8a55e" strokeWidth="0.8" />
      {/* tool path coverage */}
      <path
        d="M508 485V415c0-12 8-19 20-24 18-8 36-18 55-21l30-6c14-2 24 0 32 4l117 55c20 9 31 20 31 41v48l16 10c10 8 10 16-2 22-16 8-34 13-52 18l-64 14c-18 4-38 4-52-3L499 509c-14-6-14-17 9-24z"
        fill="#0ff"
      />
      <path d="M508 481c-20 5-26 13-18 21 4 4 10 6 15 9l120 56 30 9M669 578l50-9M782 551l26-10c10-6 10-14 0-20l-15-9" fill="none" stroke="#10e010" strokeWidth="2" />
      {/* pocket */}
      <path d="M550 395l15-9 8-6 20-2 29-6 128 60-14 10-17 6-39 3c-6 0-11-2-17-5z" fill="#d4bd6b" stroke="#9a8548" strokeWidth="0.7" />
      <path d="M581 391c8-10 34-11 50-4l94 43c0 8-16 11-45 10L590 400c-6-3-9-5-9-9z" fill="#d0b966" />
      <path d="M583 391c6-9 32-10 46-3l94 43c-2 5-8 7-18 7L637 404c-9-5-30-5-39-2-8-2-13-6-15-11z" fill="url(#pocketWall)" />
      <path d="M590 398c10 0 33-8 49-1l62 33M627 388v14M610 397c10-3 20-3 29 2l70 35M657 442l24 8-1-8M714 437l10 8M727 431l18 3M566 386l105 48M622 373l110 51" fill="none" stroke="#766636" strokeWidth="0.8" />
      <path d="M600 388v10M594 387v10M606 387v11M612 386v10" stroke="#e0cc80" strokeWidth="0.8" />
      <ellipse cx="617" cy="410" rx="11" ry="5" fill="#6a5c30" />
      <path d="M573 390c12-11 38-14 56-8l52 22 38 19c10 5 8 11-2 14-10 4-22 4-38 3l-30-12-37-15-25-11z" fill="none" stroke="#ff9a10" strokeWidth="2.2" />
      <path d="M569 390l12-7M612 379l12 4M622 380l12 4M676 402l12 4M613 413l12 4M670 438l12 3M690 440h12M716 424l8 8M708 438l16-6" stroke="#ff9a10" strokeWidth="3.5" />
      {/* machined strip */}
      <path d="M730 446l22-4-6 6z" fill="#f8c020" />
      <path d="M722 453c-8-4-6 4-2 7 10 8 15 18 16 34h6v72l-5 1 3 5 10-4 32-12 3-3-3-1v-70h3c0-16-8-34-20-42z" fill="#f6d4f0" />
      <path d="M779 558l7-2v4h-8zM781 481h4v4h-4z" fill="#f8c020" />
      <path d="M722 453l43-13c13 9 19 25 19 42l-3 1v70l4 0v4l-35 9-8 1v-74c0-20-8-32-20-40z" fill="#0000fa" />
      <path d="M745 493l6-1v72h-6z" fill="#f6d4f0" />
      <path d="M764 429v14" stroke="#0000d0" strokeWidth="2.5" />
      {/* work and machine axes */}
      <path d="M651 539V432" stroke="#5a80c8" strokeWidth="1.6" />
      <path d="M651 430l4 22h-8zM651 482l3 15-3 24-3-24z" fill="#5a80c8" />
      <path d="M651 539l92-27" stroke="#78a080" strokeWidth="1.4" />
      <path d="M743 511l-22 3 2 6zM659 536l26-12 9-1-5 5z" fill="#90c098" />
      <path d="M651 539l72 33" stroke="#c07878" strokeWidth="1.4" />
      <path d="M725 574l-17-3 3-6zM660 543l14 5 12 8-8-1z" fill="#d09090" />
      <g>
        <text x="656" y="428" fill="#2030c0">ZM</text>
        <text x="656" y="478" fill="#0848d8">ZC</text>
        <text x="682" y="519" fill="#109868">YC</text>
        <text x="721" y="506" fill="#208848">YM</text>
        <text x="673" y="572" fill="#506068">XC</text>
        <text x="704" y="588" fill="#d03030">XM</text>
      </g>
      {/* view triad */}
      <path d="M276 705l12-4 13 5v16l-13 6-12-5z" fill="#999" stroke="#ccc" strokeWidth="0.8" />
      <path d="M276 705l12 5 13-4M288 710v18" fill="none" stroke="#d4d4d4" strokeWidth="0.8" />
      <path d="M275 722v-24" stroke="#1838c0" strokeWidth="2.5" />
      <path d="M275 693l3 9h-6z" fill="#1838c0" />
      <path d="M275 722l25-8" stroke="#60a868" strokeWidth="1.5" />
      <path d="M276 722l18 9-3 0-15-6z" fill="#d02828" stroke="#d02828" />
      <circle cx="274" cy="722" r="4.5" fill="#e0e0e0" />
      <text x="271" y="694" fill="#1848e8">Z</text>
      <text x="299" y="718" fill="#30a050">Y</text>
      <text x="293" y="737" fill="#e03030">X</text>
    </svg>
  </main>
);

const RightBar = () => (
  <aside className="w-[34px] shrink-0 bg-[#d0d0d0]">
    <div className="flex flex-col items-center gap-[7px] border-b border-[#aaa] bg-[#e6e6e6] pt-1">
      <span className="-mb-0.5 w-[22px] border-t-2 border-dotted border-[#a4a4a4]" />
      {['createProgram', 'createCutter', 'createGeometry', 'createMethod', 'createOperation'].map((name) => (
        <button key={name} aria-label={name}>
          <Icon name={name} />
        </button>
      ))}
      <button aria-label="toolbar options" className="mb-px ml-1.5 self-start">
        <svg viewBox="0 0 4 6" className="h-1.5 w-1">
          <path d="M4 0v6L0 3z" />
        </svg>
      </button>
    </div>
  </aside>
);

// ---------- taskbar ----------

const Explorer = () => (
  <svg viewBox="0 0 16 16" className="size-4 shrink-0">
    <circle cx="8" cy="8" r="7" fill="#3aa0e8" stroke="#e8f4ff" strokeWidth="1.2" />
    <path d="M4 8.500h8c0-5-7-5-7.500 0S9 13 12 10.500" fill="none" stroke="#fff" strokeWidth="1.8" />
  </svg>
);

const Taskbar = () => (
  <footer className="flex h-[30px] shrink-0 items-stretch bg-linear-to-b from-[#4a8af4] via-[#2459d6] via-15% to-[#1f4fc4] text-xs text-white">
    <button className="flex w-[97px] items-center gap-1.5 rounded-r-xl bg-linear-to-b from-[#5cb45c] via-[#3c9a3c] via-20% to-[#2c7e2c] pl-2.5 text-lg italic">
      <svg viewBox="0 0 20 20" className="size-5">
        <path d="M4 3c3-2 5-1 6 0L9 9C7 8 5 8 2 9z" fill="#f06030" />
        <path d="M11 4c3 1 5 1 8 0l-2 6c-3 1-5 0-7-1z" fill="#80d040" />
        <path d="M2 10c3-1 5-1 7 0l-2 6c-2-1-4-1-6 0z" fill="#50a0f8" />
        <path d="M10 11c2 1 4 1 7 0l-2 6c-3 1-5 1-7 0z" fill="#fcd030" />
      </svg>
      开始
    </button>
    <div className="flex w-[102px] items-center gap-[7px] pl-3">
      <button aria-label="Internet Explorer">
        <Explorer />
      </button>
      <button aria-label="viewer">
        <svg viewBox="0 0 16 16" className="size-4">
          <path d="M0 0h16v16H0z" fill="#2c2018" />
          <path d="M3 3c5-1 9 1 9 5s-5 6-7 3 2-5 4-3M2 7c2-3 5-3 7-2M12 5c3 4 1 8-3 9" fill="none" stroke="#f0a848" strokeWidth="1.6" />
        </svg>
      </button>
      <button aria-label="QQ">
        <svg viewBox="0 0 16 16" className="size-4">
          <path d="M8 0c4 0 4 4 4 6 2 2 3 5 2 6l-2-1c-1 3-7 3-8 0l-2 1c-1-1 0-4 2-6 0-2 0-6 4-6z" fill="#111" />
          <ellipse cx="8" cy="11" rx="3.5" ry="3.5" fill="#fff" />
          <path d="M4 7c3 1 5 1 8 0v2c-3 1-5 1-8 0z" fill="#e02020" />
          <path d="M6 3.500h1M9 3.500h1" stroke="#fff" strokeWidth="2" />
          <path d="M5 5.500h6l-3 1zM3 14h4v2H3zM9 14h4v2H9z" fill="#f8b020" />
        </svg>
      </button>
      <span className="mb-3 ml-1 text-sm leading-none">»</span>
    </div>
    <div className={`flex gap-0.5 py-[3px] whitespace-nowrap ${SONG_FONT}`}>
      <button className="flex w-[158px] items-center gap-2 rounded-xs bg-[#3c80f0] pl-2">
        <svg viewBox="0 0 16 16" className="size-4">
          <path d="M2 1l9 1v8l-9-1z" fill="#a8dcff" stroke="#e8f4ff" />
          <path d="M11 2l3 1v11l-3-1z" fill="#dde8f4" />
          <path d="M3 12l7 1v2l-7-1z" fill="#dde8f4" />
        </svg>
        我的电脑
      </button>
      <button className="flex w-[158px] items-center gap-1 rounded-xs bg-[#3c80f0] pl-2">
        <Explorer />
        ug拉伸不能设置片...
      </button>
      <button className="flex w-[158px] items-center gap-1 rounded-xs border border-[#163a98] bg-[#1e4fb8] pl-2 text-[11px]">
        <Icon name="logo" className="size-4" />
        NX 8.5 - 加工 - ...
      </button>
    </div>
    <div className="ml-auto flex w-[94px] items-center border-l border-[#1450a8] bg-linear-to-b from-[#40b0f8] via-[#1290e8] via-20% to-[#1080d8]">
      <button aria-label="Show hidden icons" className="-ml-2.5 size-[18px] shrink-0 rounded-full border border-[#a8d8ff] bg-[#2a80f0]">
        <svg viewBox="0 0 16 16" fill="none" stroke="#fff" strokeWidth="2.2">
          <path d="M10 4L6 8l4 4" />
        </svg>
      </button>
      <svg viewBox="0 0 36 16" className="ml-0.5 h-4 w-9 shrink-0">
        <path d="M1 2h15v13H1z" fill="#e0f0f8" stroke="#1c3c68" />
        <path d="M4 2h9v13H6z" fill="#1860b0" />
        <circle cx="24" cy="7" r="5.5" fill="#888" stroke="#ddd" />
        <circle cx="24" cy="7" r="2.5" fill="#333" />
        <path d="M31 7c0 4-2 6-5 8" fill="none" stroke="#b8c8ff" />
      </svg>
      <time className="ml-auto pr-3 leading-none">13:02</time>
    </div>
  </footer>
);

// ---------- floating items ----------

const SpeedBall = () => (
  <div className="absolute top-2.5 right-[18px] flex size-[58px] items-center justify-center rounded-full bg-linear-to-b from-[#e8f5fd] via-[#a4d4fa] to-[#6cbcf8] text-[11px] text-[#123] shadow-md font-['Liberation_Sans',sans-serif]">
    0KB/s
  </div>
);

const Watermark = () => (
  <svg viewBox="0 0 300 108" className="pointer-events-none absolute right-0 bottom-0 h-[108px] w-[300px] overflow-visible" role="img" aria-label="3D世界网">
    <path d="M41 5l43 24v49l-43 24L-1 78V29z" fill="#1b4d85" />
    <path d="M57 14l27 15v49l-43 24-20-11V66l20 12 22-12V41z" fill="#1f7497" />
    <path d="M0 31C26 18 50 34 64 41c2-12-1-20-8-27M0 57c4-11 12-18 19-21M20 65c-1 14 8 26 22 36M63 65c8-3 18-10 21-20" fill="none" stroke="#9cc0d8" strokeWidth="1" />
    <path d="M41 5l43 24v49l-43 24L-1 78V29z" fill="none" stroke="#cddde6" strokeWidth="2.5" />
    <path d="M41 28l22 12v26L41 78 19 66V40z" fill="#1b4d85" stroke="#d8dde2" strokeWidth="4" />
    <path d="M41 52l20-11v24L41 76z" fill="#1f7f9f" />
    <path d="M21 41l20 11 20-11M41 52v24" fill="none" stroke="#9cc8dc" />
    <g fill="#2884ab" stroke="#c8e4f0" strokeLinejoin="round" paintOrder="stroke" className="font-bold">
      <text x="91" y="61" strokeWidth="4" className="text-[48px] font-['Liberation_Sans','Noto_Sans_CJK_SC',sans-serif]">
        3D世界网
      </text>
      <text x="94" y="83" strokeWidth="3" className="text-[20px] font-['DejaVu_Sans',sans-serif]">
        www.3DSJW.COM
      </text>
    </g>
    <path d="M156 89h5v4h-5zM158 89v-3h5v4h-2" fill="none" stroke="#fff" />
    <path d="M156 97h6l-3 3z" fill="#fff" />
  </svg>
);

export default function App() {
  return (
    <div className={`relative flex h-screen flex-col overflow-hidden bg-[#d0d0d0] text-black ${UI_FONT}`}>
      <Defs />
      <TitleBar />
      <MenuBar />
      <div className="shrink-0 bg-linear-to-b from-[#e2e2e2] to-[#cbcbcb]">
        <ToolRow groups={rowOne} />
        <ToolRow groups={rowTwo} />
        <TextRow />
      </div>
      <StatusBar />
      <div className="flex min-h-0 flex-1">
        <ResourceBar />
        <Navigator />
        <Viewport />
        <RightBar />
      </div>
      <Taskbar />
      <SpeedBall />
      <Watermark />
    </div>
  );
}
